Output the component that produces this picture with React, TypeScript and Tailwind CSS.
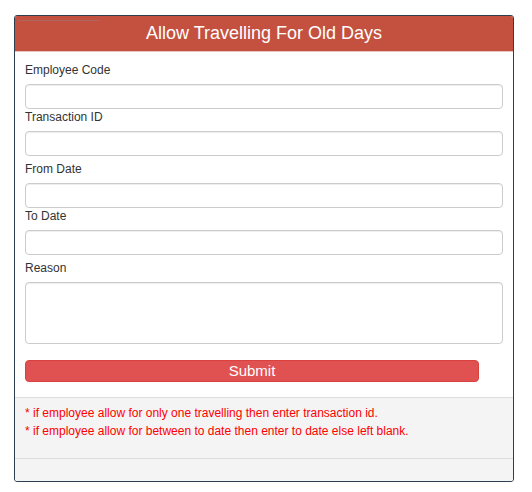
import React from 'react';

const inputCls =
  'block w-full h-[25px] rounded-[4px] border border-[#cccccc] bg-white shadow-[inset_0_1px_1px_rgba(0,0,0,0.075)]';
const labelCls = 'block text-[12px] leading-[17px] text-[#333333] mb-[5px]';

function Field({ label, area }: { label: string; area?: boolean }) {
  return (
    <div>
      <label className={labelCls}>{label}</label>
      {area ? (
        <textarea className="block w-full h-[62px] rounded-[4px] border border-[#cccccc] bg-white resize-none shadow-[inset_0_1px_1px_rgba(0,0,0,0.075)]" />
      ) : (
        <input type="text" className={inputCls} />
      )}
    </div>
  );
}

export default function App() {
  return (
    <div className="min-h-[492px] bg-white pt-[15px] pl-[14px] font-['Liberation_Sans',Arial,sans-serif]">
      <div className="w-[500px] overflow-hidden rounded-[3px] border border-[#2c3e50]">
        {/* Header */}
        <div className="relative h-[36px] border-b border-[#e8c6c0] bg-[#c4513f] text-center text-[18px] leading-[35px] text-white">
          <div className="absolute left-[3px] top-[4px] h-[1px] w-[82px] bg-[#a8685e]" />
          Allow Travelling For Old Days
        </div>

        {/* Form */}
        <div className="px-[10px] pt-[10px] pb-[15px]">
          <Field label="Employee Code" />
          <Field label="Transaction ID" />
          <div className="mt-[5px]">
            <Field label="From Date" />
            <Field label="To Date" />
          </div>
          <div className="mt-[5px]">
            <Field label="Reason" area />
          </div>
          <button className="mt-[16px] block h-[22px] w-[454px] rounded-[4px] border border-[#d9413e] bg-[#e05252] text-[15px] leading-[20px] text-white">
            Submit
          </button>
        </div>

        {/* Notes */}
        <div className="border-t border-[#dddddd] bg-[#f4f4f4] px-[10px] pt-[6px] pb-[18px] text-[12px] leading-[18px] text-[#ff0000]">
          <div>* if employee allow for only one travelling then enter transaction id.</div>
          <div>* if employee allow for between to date then enter to date else left blank.</div>
        </div>
        <div className="h-[23px] border-t border-[#dddddd] bg-[#f4f4f4]" />
      </div>
    </div>
  );
}
